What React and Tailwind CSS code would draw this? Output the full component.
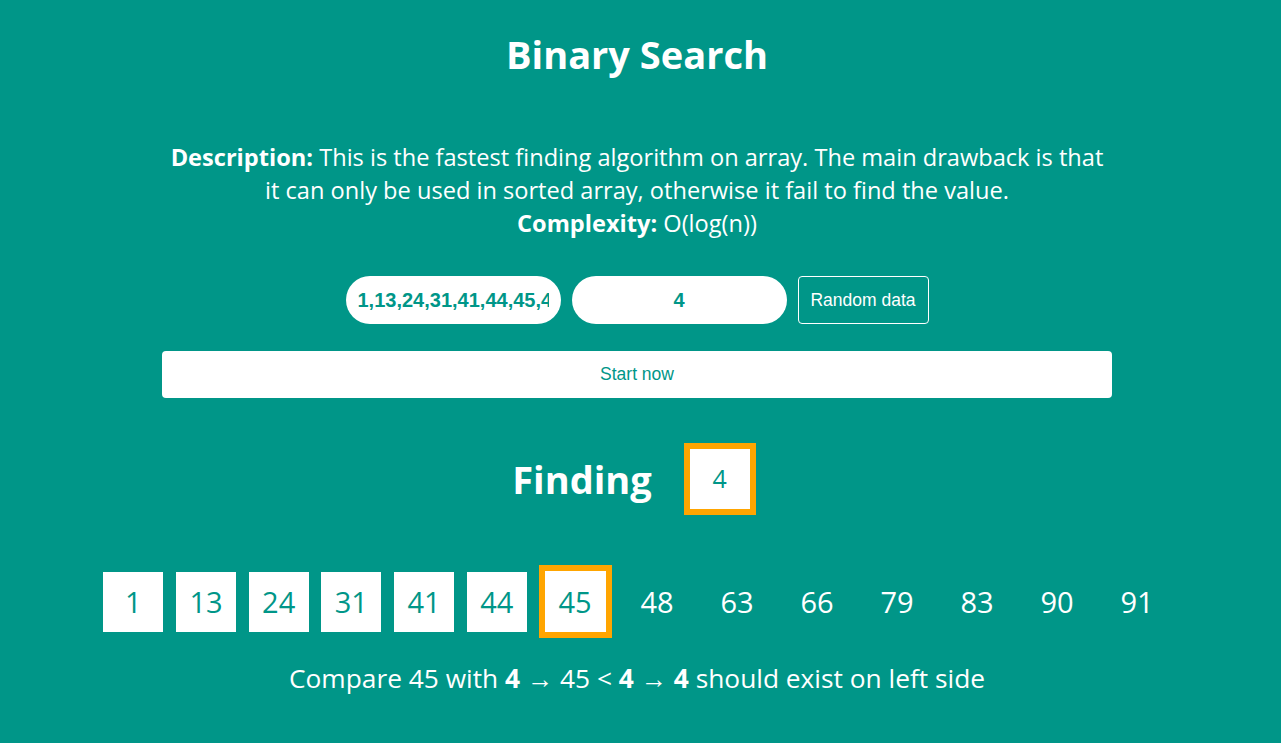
const data = [1, 13, 24, 31, 41, 44, 45, 48, 63, 66, 79, 83, 90, 91];
const current = 6;

export default function App() {
  return (
    <div className="min-h-[743px] bg-[#009688] text-white font-['Open_Sans','Noto_Sans',sans-serif]">
      <div className="w-[1274px] flex flex-col items-center">
        {/* Title */}
        <h1 className="pt-[30px] text-[38px] leading-[48px] font-bold">Binary Search</h1>

        {/* Description */}
        <div className="mt-[63px] text-[23.6px] leading-[33px] text-center">
          <div className="whitespace-nowrap">
            <b>Description:</b> This is the fastest finding algorithm on array. The main drawback is that
          </div>
          <div className="whitespace-nowrap">
            it can only be used in sorted array, otherwise it fail to find the value.
          </div>
          <div className="whitespace-nowrap">
            <b>Complexity:</b> O(log(n))
          </div>
        </div>

        {/* Inputs */}
        <div className="mt-[36px] flex items-center gap-[11px] font-['Liberation_Sans',Arial,sans-serif]">
          <input
            defaultValue={data.join(",")}
            className="w-[215px] h-[48px] rounded-full bg-white text-[#009688] font-bold text-[20px] text-center px-3 outline-none"
          />
          <input
            defaultValue="4"
            className="w-[215px] h-[48px] rounded-full bg-white text-[#009688] font-bold text-[20px] text-center px-3 outline-none"
          />
          <button className="w-[131px] h-[48px] rounded border border-white text-white text-[17.5px]">
            Random data
          </button>
        </div>

        <button className="mt-[27px] w-[950px] h-[47px] rounded bg-white text-[#009688] text-[17.5px] font-['Liberation_Sans',Arial,sans-serif]">
          Start now
        </button>

        {/* Finding */}
        <div className="mt-[45px] mr-[6px] flex items-center gap-[32px]">
          <h2 className="text-[38px] font-bold leading-none">Finding</h2>
          <div className="w-[72px] h-[72px] border-[6px] border-[#ffa500] bg-white text-[#009688] text-[25px] flex items-center justify-center">
            4
          </div>
        </div>

        {/* Array */}
        <div className="mt-[50px] h-[73px] flex items-center">
          {data.map((n, i) => {
            if (i === current)
              return (
                <div
                  key={n}
                  className="mx-[5.5px] w-[73px] h-[73px] border-[6px] border-[#ffa500] bg-white text-[#009688] text-[29px] flex items-center justify-center"
                >
                  {n}
                </div>
              );
            if (i < current)
              return (
                <div
                  key={n}
                  className="mx-[6.35px] w-[60px] h-[60px] bg-white text-[#009688] text-[29px] flex items-center justify-center"
                >
                  {n}
                </div>
              );
            return (
              <div key={n} className="w-[80px] h-[60px] text-white text-[29px] flex items-center justify-center">
                {n}
              </div>
            );
          })}
        </div>

        {/* Step */}
        <p className="mt-[22px] text-[26.3px] leading-[36px]">
          Compare 45 with <b>4</b> → 45 &lt; <b>4</b> → <b>4</b> should exist on left side
        </p>
      </div>
    </div>
  );
}
